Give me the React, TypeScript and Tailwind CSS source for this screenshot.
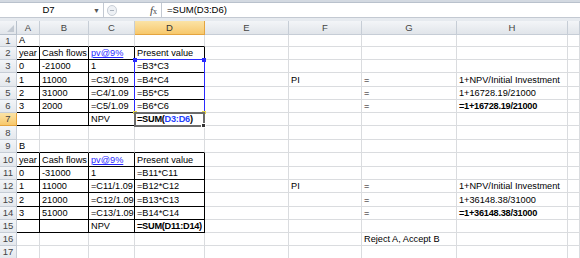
import type { ReactNode } from "react";

// Excel 2010 style sheet: two PI (profitability index) examples
type CellDef = { t?: ReactNode; c?: string };

const COLS = ["A", "B", "C", "D", "E", "F", "G", "H", ""];

const link = (s: string) => (
  <span className="text-[#2a2aff] underline decoration-[#2a2aff]">{s}</span>
);

const headRow = (): CellDef[] => [
  { t: "year" },
  { t: "Cash flows" },
  { t: link("pv@9%") },
  { t: "Present value" },
];

const bold = "font-bold tracking-[-0.25px]";

// rows 1..17, cells A..I
const rows: { h: string; cells: CellDef[] }[] = [
  { h: "h-[12px]", cells: [{ t: "A" }] },
  { h: "h-[13px]", cells: headRow() },
  { h: "h-[13px]", cells: [{ t: "0" }, { t: "-21000" }, { t: "1" }, { t: "=B3*C3" }] },
  {
    h: "h-[14px]",
    cells: [
      { t: "1" },
      { t: "11000" },
      { t: "=C3/1.09" },
      { t: "=B4*C4" },
      {},
      { t: "PI" },
      { t: "=" },
      { t: "1+NPV/Initial Investment" },
    ],
  },
  {
    h: "h-[13px]",
    cells: [
      { t: "2" },
      { t: "31000" },
      { t: "=C4/1.09" },
      { t: "=B5*C5" },
      {},
      {},
      { t: "=" },
      { t: "1+16728.19/21000" },
    ],
  },
  {
    h: "h-[13px]",
    cells: [
      { t: "3" },
      { t: "2000" },
      { t: "=C5/1.09" },
      { t: "=B6*C6" },
      {},
      {},
      { t: "=" },
      { t: "=1+16728.19/21000", c: bold },
    ],
  },
  {
    h: "h-[13px]",
    cells: [
      {},
      {},
      { t: "NPV" },
      {
        t: (
          <>
            =SUM(<span className="text-[#1f3fff]">D3:D6</span>)
          </>
        ),
        c: bold,
      },
    ],
  },
  { h: "h-[14px]", cells: [] },
  { h: "h-[13px]", cells: [{ t: "B" }] },
  { h: "h-[14px]", cells: headRow() },
  { h: "h-[13px]", cells: [{ t: "0" }, { t: "-31000" }, { t: "1" }, { t: "=B11*C11" }] },
  {
    h: "h-[13px]",
    cells: [
      { t: "1" },
      { t: "11000" },
      { t: "=C11/1.09" },
      { t: "=B12*C12" },
      {},
      { t: "PI" },
      { t: "=" },
      { t: "1+NPV/Initial Investment" },
    ],
  },
  {
    h: "h-[14px]",
    cells: [
      { t: "2" },
      { t: "21000" },
      { t: "=C12/1.09" },
      { t: "=B13*C13" },
      {},
      {},
      { t: "=" },
      { t: "1+36148.38/31000" },
    ],
  },
  {
    h: "h-[13px]",
    cells: [
      { t: "3" },
      { t: "51000" },
      { t: "=C13/1.09" },
      { t: "=B14*C14" },
      {},
      {},
      { t: "=" },
      { t: "=1+36148.38/31000", c: bold },
    ],
  },
  {
    h: "h-[13px]",
    cells: [{}, {}, { t: "NPV" }, { t: "=SUM(D11:D14)", c: bold }],
  },
  { h: "h-[13px]", cells: [{}, {}, {}, {}, {}, {}, { t: "Reject A, Accept B" }] },
  { h: "h-[13px]", cells: [] },
];

const tableRows = [2, 3, 4, 5, 6, 7, 10, 11, 12, 13, 14, 15];
const topRows = [1, 9];

const FormulaBar = () => (
  <div className="h-[21px] flex flex-col bg-[#dfe4ea]">
    <div className="h-[3px] bg-[#d3d9e1] border-b border-[#b9c1cc]" />
    <div className="h-[15px] flex bg-white border-b border-[#c3c9d2]">
      <div className="w-[104px] flex items-center border-r border-[#c3c9d2] relative">
        <span className="flex-1 text-center pl-[4px] text-[9.5px]">D7</span>
        <span className="w-[10px] text-[7px] text-[#555] leading-none">▼</span>
      </div>
      <div className="w-[58px] flex items-center border-r border-[#c3c9d2] bg-white">
        <div className="ml-[3px] w-[10px] h-[11px] rounded-full border border-[#c8ced6] bg-[#eef1f5] flex items-center justify-center">
          <div className="w-[4px] h-[1px] bg-[#aab2bd]" />
        </div>
        <span className="ml-auto mr-[4px] italic font-['Liberation_Serif',serif] text-[11px] text-[#444]">
          f<span className="text-[8px] not-italic">x</span>
        </span>
      </div>
      <div className="flex-1 flex items-center pl-[5px] text-[9.5px]">=SUM(D3:D6)</div>
    </div>
    <div className="h-[3px] bg-[#e6eaef]" />
  </div>
);

export default function App() {
  return (
    <div className="w-[580px] h-[258px] overflow-hidden bg-white text-[9.2px] text-black font-['Liberation_Sans',Arial,sans-serif] leading-none">
      <FormulaBar />
      <div className="relative grid grid-cols-[17px_23px_49px_46px_70px_84px_73px_95px_111px_12px]">
        {/* column headers */}
        <div className="h-[14px] bg-gradient-to-b from-[#f3f5f8] to-[#e1e5ea] border-r border-b border-[#b8c1cc] relative">
          <div className="absolute right-[2px] bottom-[2px] w-0 h-0 border-l-[7px] border-l-transparent border-b-[7px] border-b-[#c2c9d2]" />
        </div>
        {COLS.map((c, i) =>
          c === "D" ? (
            <div
              key={i}
              className="h-[14px] flex items-center justify-center bg-gradient-to-b from-[#fbe3a6] to-[#f7c86b] border-r border-b border-[#e4a43f] text-[#333] text-[9.5px]"
            >
              {c}
            </div>
          ) : (
            <div
              key={i}
              className="h-[14px] flex items-center justify-center bg-gradient-to-b from-[#f3f5f8] to-[#e1e5ea] border-r border-b border-[#c6cdd6] text-[#444] text-[9.5px]"
            >
              {c}
            </div>
          )
        )}

        {rows.map((row, ri) => {
          const n = ri + 1;
          const inTable = tableRows.includes(n);
          const isTop = topRows.includes(n);
          return [
            <div
              key={`h${n}`}
              className={`${row.h} flex items-center justify-center border-r border-b text-[9.5px] ${
                n === 7
                  ? "bg-gradient-to-b from-[#fbe3a6] to-[#f7c86b] border-[#e4a43f]"
                  : "bg-gradient-to-b from-[#f3f5f8] to-[#e4e8ed] border-[#c6cdd6]"
              } text-[#444]`}
            >
              {n}
            </div>,
            ...COLS.map((_, ci) => {
              const cell = row.cells[ci] ?? {};
              const boxed = ci < 4 && inTable;
              const topEdge = ci < 4 && isTop;
              const border = boxed
                ? "border-r border-b border-black"
                : topEdge
                  ? "border-r border-b border-r-[#dadcdf] border-b-black"
                  : "border-r border-b border-[#dadcdf]";
              return (
                <div
                  key={`${n}-${ci}`}
                  className={`${row.h} flex items-end pl-[2px] pb-[1px] whitespace-nowrap overflow-visible ${border} ${
                    cell.c ?? ""
                  }`}
                >
                  {cell.t}
                </div>
              );
            }),
          ];
        })}

        {/* formula reference highlight D3:D6 */}
        <div className="absolute left-[134px] top-[38px] w-[71px] h-[54px] border border-[#2b2bff] pointer-events-none">
          <div className="absolute -left-[2px] -top-[2px] w-[4px] h-[4px] bg-[#2b2bff]" />
          <div className="absolute -right-[2px] -top-[2px] w-[4px] h-[4px] bg-[#2b2bff]" />
          <div className="absolute -left-[2px] -bottom-[2px] w-[4px] h-[3px] bg-[#e8d84a]" />
          <div className="absolute -right-[2px] -bottom-[2px] w-[4px] h-[3px] bg-[#e8d84a]" />
        </div>
        {/* active cell D7 */}
        <div className="absolute left-[134px] top-[91px] w-[71px] h-[15px] border-2 border-[#6b6b6b] pointer-events-none">
          <div className="absolute -right-[3px] -bottom-[3px] w-[5px] h-[5px] bg-[#333] border border-white" />
        </div>
      </div>
    </div>
  );
}
